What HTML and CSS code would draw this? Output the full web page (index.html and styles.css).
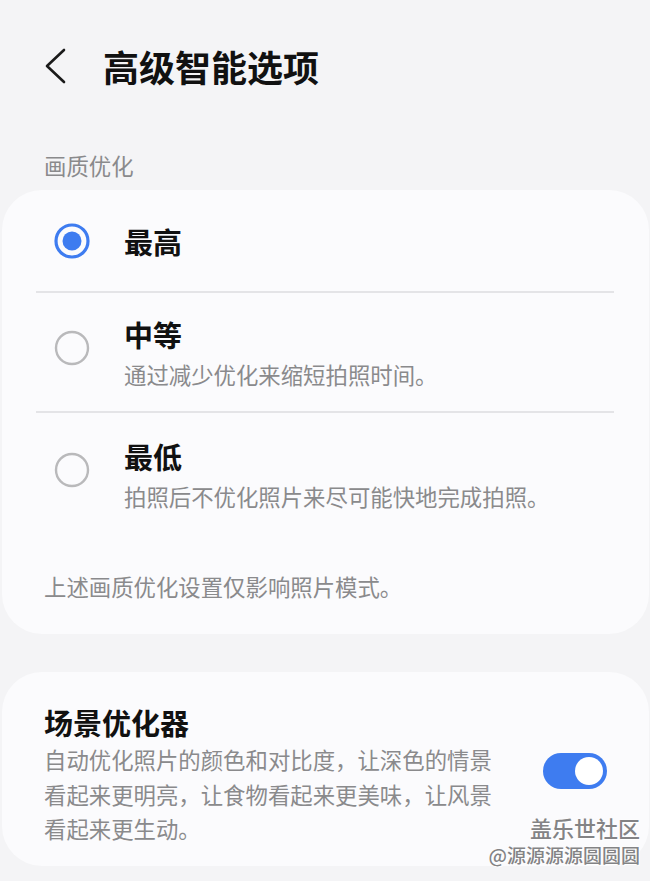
FILE: index.html
```html
<!DOCTYPE html>
<html lang="zh-CN">
<head>
    <meta charset="UTF-8">
    <meta name="viewport" content="width=device-width, initial-scale=1.0">
    <title>高级智能选项</title>
    <link rel="stylesheet" href="styles.css">
</head>
<body>
    <header class="topbar">
        <button class="back" aria-label="返回">
            <svg width="24" height="36" viewBox="0 0 24 36">
                <polyline points="20,2 3,18 20,34" fill="none" stroke="#1a1a1a" stroke-width="2.6" stroke-linecap="round" stroke-linejoin="round"/>
            </svg>
        </button>
        <h1>高级智能选项</h1>
    </header>

    <div class="section-label">画质优化</div>

    <section class="card options">
        <div class="option option-top">
            <span class="radio">
                <svg width="38" height="38" viewBox="0 0 38 38">
                    <circle cx="19" cy="19" r="16" fill="none" stroke="#3e7cf0" stroke-width="3.2"/>
                    <circle cx="19" cy="19" r="9.5" fill="#3e7cf0"/>
                </svg>
            </span>
            <div class="option-text">
                <div class="option-title">最高</div>
            </div>
        </div>
        <div class="divider"></div>
        <div class="option">
            <span class="radio">
                <svg width="38" height="38" viewBox="0 0 38 38">
                    <circle cx="19" cy="19" r="16" fill="none" stroke="#b9b9bb" stroke-width="2.4"/>
                </svg>
            </span>
            <div class="option-text">
                <div class="option-title">中等</div>
                <div class="option-desc">通过减少优化来缩短拍照时间。</div>
            </div>
        </div>
        <div class="divider"></div>
        <div class="option option-low">
            <span class="radio">
                <svg width="38" height="38" viewBox="0 0 38 38">
                    <circle cx="19" cy="19" r="16" fill="none" stroke="#b9b9bb" stroke-width="2.4"/>
                </svg>
            </span>
            <div class="option-text">
                <div class="option-title">最低</div>
                <div class="option-desc">拍照后不优化照片来尽可能快地完成拍照。</div>
            </div>
        </div>
        <p class="note">上述画质优化设置仅影响照片模式。</p>
    </section>

    <section class="card scene">
        <div class="scene-text">
            <div class="option-title">场景优化器</div>
            <div class="scene-desc">自动优化照片的颜色和对比度，让深色的情景看起来更明亮，让食物看起来更美味，让风景看起来更生动。</div>
        </div>
        <span class="switch"><span class="knob"></span></span>
    </section>

    <div class="watermark">
        <div class="wm-main">盖乐世社区</div>
        <div class="wm-sub">@源源源源圆圆圆</div>
    </div>
</body>
</html>
```

FILE: styles.css
```css
body {
    font-family: "Noto Sans CJK SC", "Noto Sans", sans-serif;
    background-color: #f4f4f6;
    color: #111;
    margin: 0;
    position: relative;
    min-height: 881px;
}
.topbar {
    height: 132px;
    display: flex;
    align-items: center;
}
.back {
    background: none;
    border: none;
    padding: 0;
    margin-left: 44px;
    width: 24px;
    height: 36px;
    display: flex;
}
h1 {
    margin: 0 0 0 35px;
    font-size: 36px;
    font-weight: 700;
    line-height: 48px;
}
.section-label {
    margin: 18px 0 10px 44px;
    font-size: 22.4px;
    line-height: 30px;
    color: #8a8a8c;
}
.card {
    background: #fbfbfd;
    border-radius: 40px;
    margin: 0 1px 0 2px;
}
.option {
    display: flex;
    align-items: center;
    padding: 21px 0 20px 51px;
}
.option-top {
    height: 101px;
    padding-top: 0;
    padding-bottom: 0;
}
.option-low {
    padding-top: 23px;
    padding-bottom: 18px;
}
.radio {
    width: 38px;
    height: 38px;
    margin-right: 33px;
    margin-bottom: 10px;
    display: flex;
}
.option-top .radio {
    margin-bottom: 0;
}
.option-title {
    font-size: 29px;
    font-weight: 700;
    line-height: 40px;
    color: #111;
}
.option-desc {
    margin-top: 3px;
    font-size: 22.4px;
    line-height: 34px;
    color: #8a8a8c;
}
.divider {
    height: 2px;
    background: #e4e4e7;
    margin: 0 35px 0 34px;
}
.note {
    margin: 0;
    padding: 38px 0 31px 42px;
    font-size: 22.4px;
    line-height: 34px;
    color: #8a8a8c;
}
.scene {
    margin-top: 38px;
    display: flex;
    align-items: center;
    justify-content: space-between;
    padding: 30px 42px 20px 42px;
}
.scene-text {
    width: 452px;
}
.scene-desc {
    font-size: 22.4px;
    line-height: 34.5px;
    color: #8a8a8c;
}
.switch {
    width: 64px;
    height: 36px;
    border-radius: 18px;
    background: #3e7cf0;
    position: relative;
    margin-bottom: 6px;
}
.knob {
    position: absolute;
    top: 4px;
    right: 4px;
    width: 28px;
    height: 28px;
    border-radius: 50%;
    background: #fff;
}
.watermark {
    position: absolute;
    top: 812px;
    right: 10px;
    text-align: right;
    color: #838385;
    font-weight: 500;
    text-shadow: 0 0 2px #fff, 1px 1px 0 #fff;
}
.wm-main {
    font-size: 22px;
    line-height: 30px;
}
.wm-sub {
    font-size: 19px;
    line-height: 26px;
}
```
